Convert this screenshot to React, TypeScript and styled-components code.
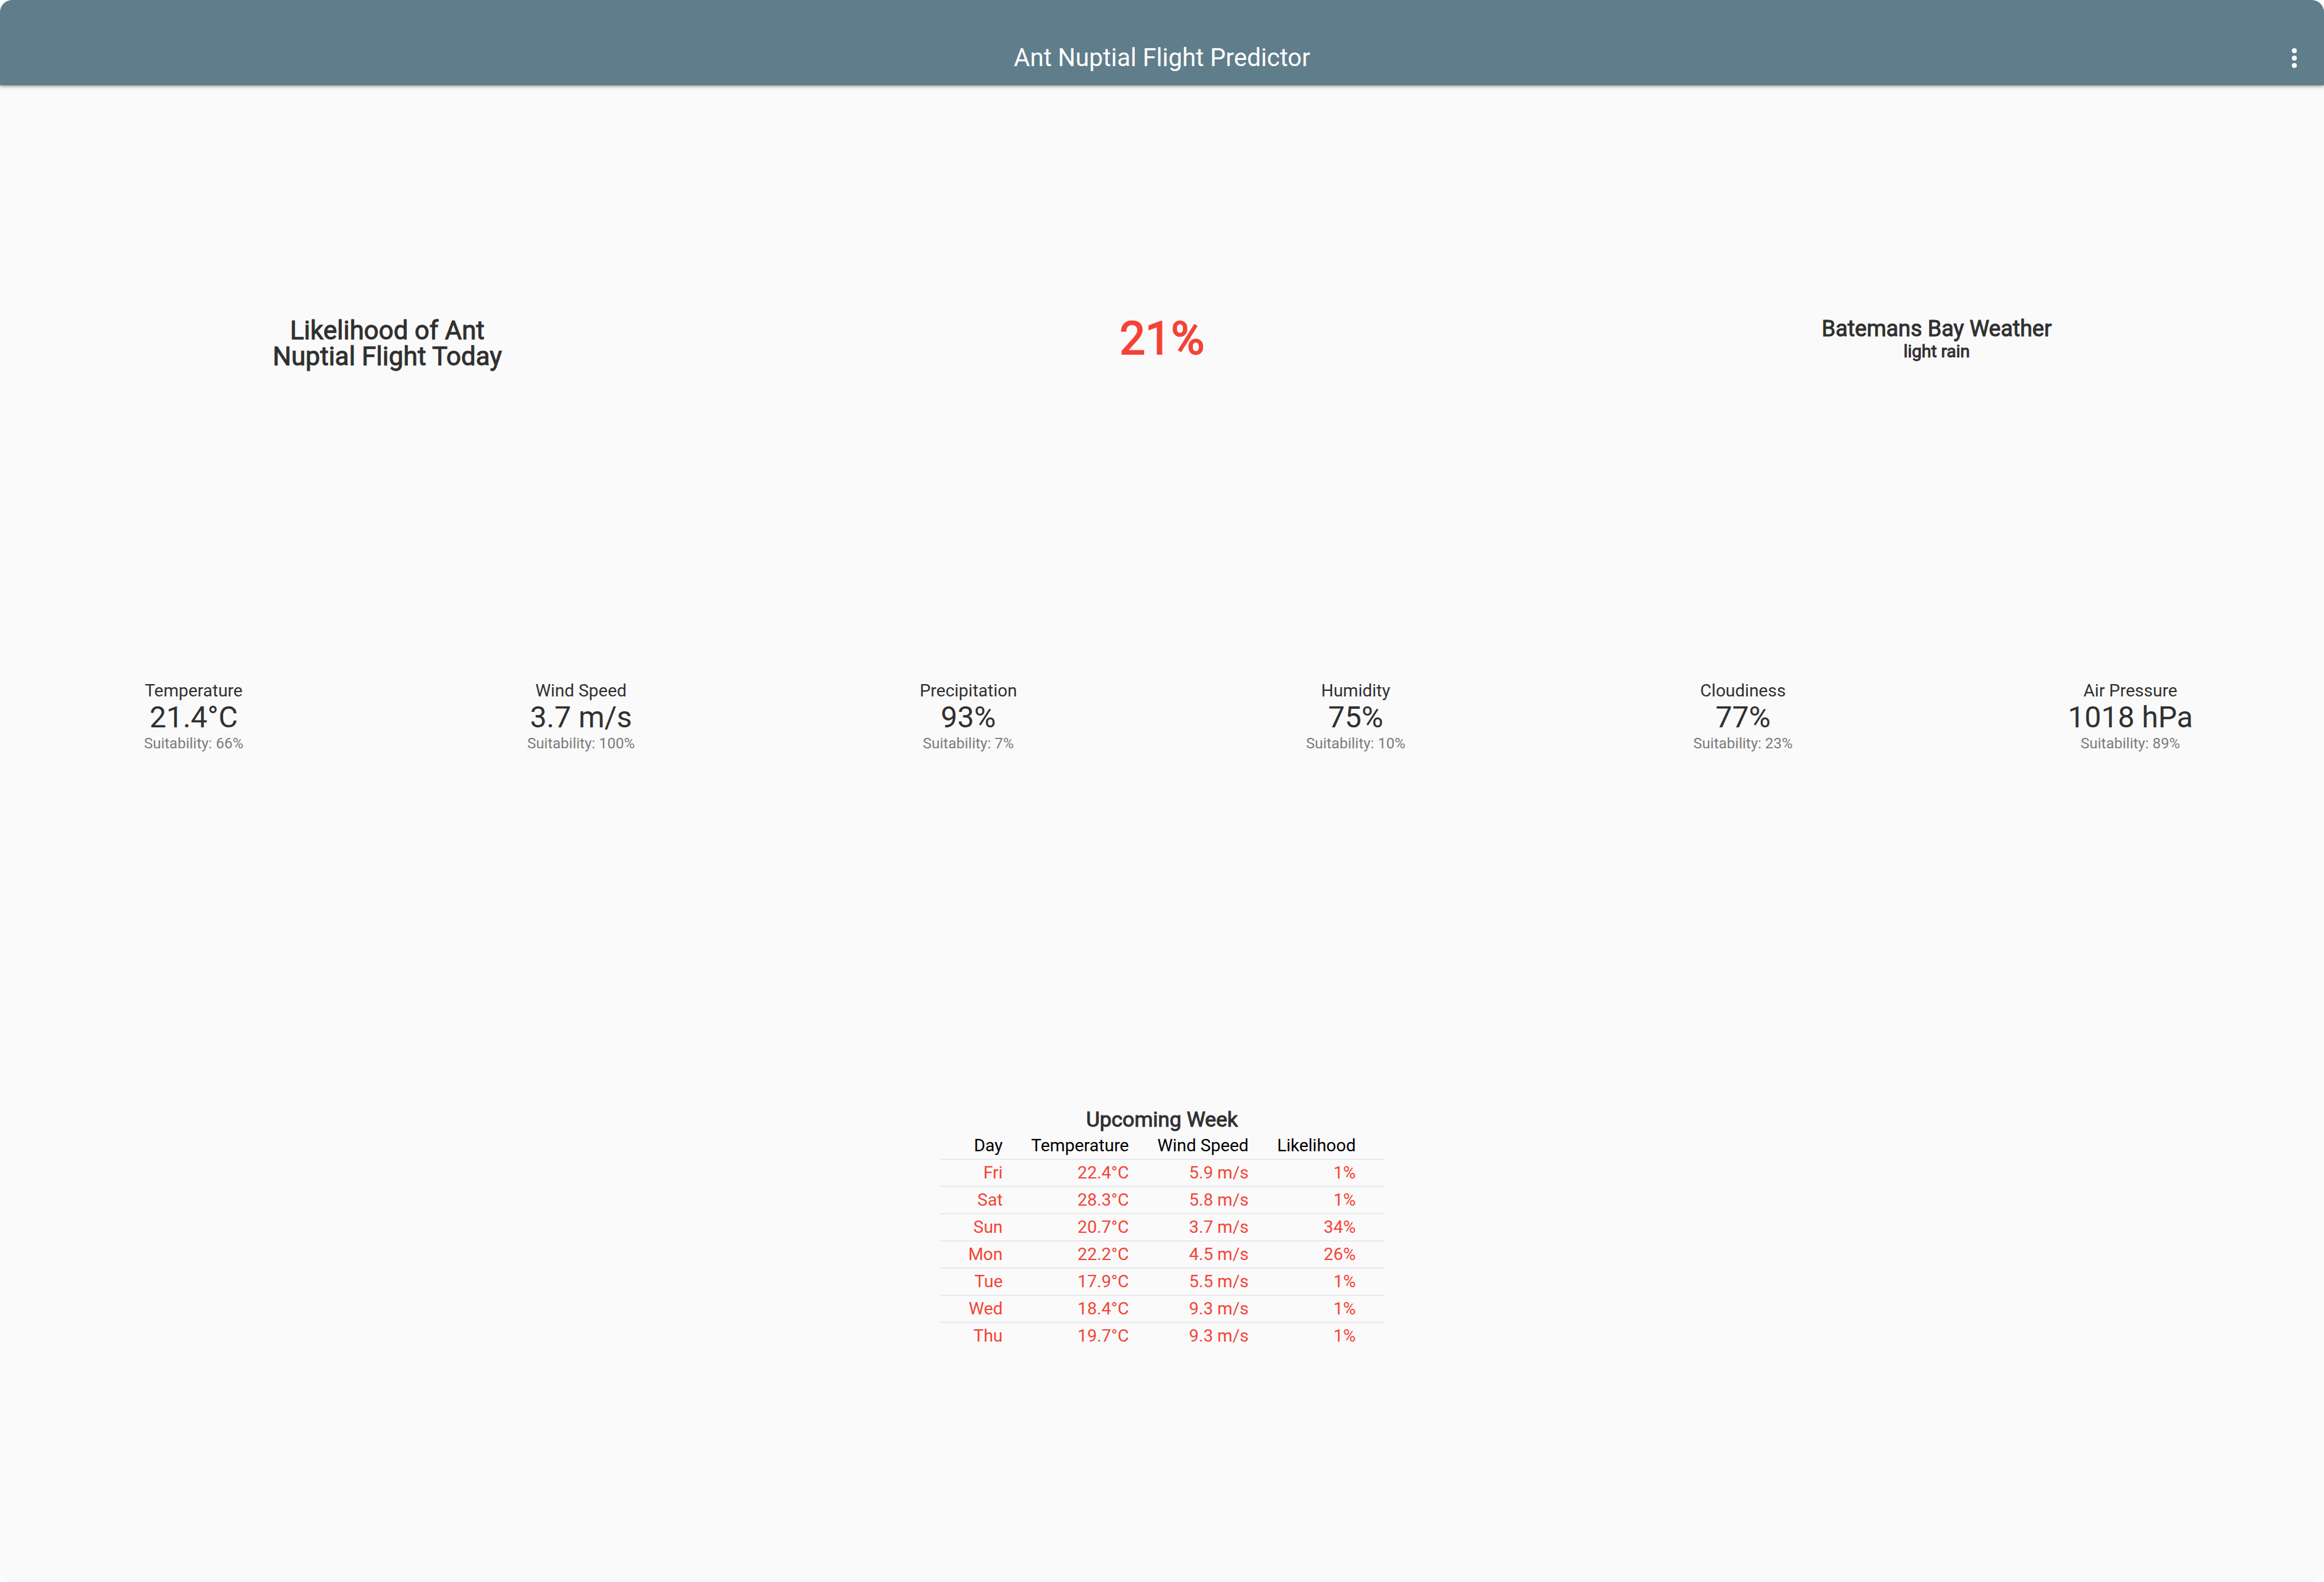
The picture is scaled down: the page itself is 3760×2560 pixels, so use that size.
import React from "react";
import styled, { createGlobalStyle } from "styled-components";

const GlobalStyle = createGlobalStyle`
  *, *::before, *::after { box-sizing: border-box; }
  body { margin: 0; background: #ffffff; font-family: Roboto, sans-serif; }
  h1, h2, p, dl, dt, dd { margin: 0; font-weight: 400; }
`;

const Screen = styled.div`
  display: flex;
  flex-direction: column;
  min-height: 100vh;
  overflow: hidden;
  border-radius: 20px;
  background: #fafafa;
  color: #303030;
`;

const AppBar = styled.header`
  display: grid;
  grid-template-columns: 1fr auto 1fr;
  align-items: center;
  padding: 50px 24px 0;
  height: 138px;
  background: #607d8b;
  color: #ffffff;
  box-shadow: 0 1px 6px rgba(0, 0, 0, 0.5);
`;

const Title = styled.h1`
  grid-column: 2;
  font-size: 40px;
  line-height: 48px;
`;

const MenuButton = styled.button`
  justify-self: end;
  display: flex;
  width: 48px;
  height: 48px;
  padding: 0;
  border: 0;
  background: none;
  color: inherit;
  cursor: pointer;
`;

const Content = styled.main`
  flex: 1;
  display: grid;
  grid-template-rows: 820fr 404fr 1198fr;
`;

const Row = styled.section`
  display: grid;
  grid-auto-flow: column;
  grid-auto-columns: 1fr;
  align-items: center;
  text-align: center;
`;

const Heading = styled.h2`
  font-size: 36px;
  line-height: 42px;
  -webkit-text-stroke: 1px currentColor;
`;

const LeadHeading = styled(Heading)`
  padding-top: 16px;
  font-size: 42px;
`;

const WeekHeading = styled(Heading)`
  margin-bottom: 4px;
  font-size: 34px;
  line-height: 36px;
`;

const Chance = styled.p`
  color: #f44336;
  font-size: 74px;
  line-height: 80px;
  -webkit-text-stroke: 2px currentColor;
`;

const Condition = styled.p`
  font-size: 28px;
  line-height: 32px;
  -webkit-text-stroke: 1px currentColor;
`;

const Metric = styled.dl`
  display: flex;
  flex-direction: column;
`;

const MetricName = styled.dt`
  font-size: 28px;
  line-height: 30px;
`;

const MetricValue = styled.dd`
  font-size: 48px;
  line-height: 56px;
`;

const Suitability = styled.dd`
  color: #7c7c7c;
  font-size: 24px;
  line-height: 28px;
`;

const Week = styled.section`
  display: flex;
  flex-direction: column;
  align-items: center;
  justify-content: center;
  padding-top: 54px;
`;

const Table = styled.table`
  border-collapse: separate;
  border-spacing: 0;
  font-size: 28px;
  line-height: 32px;
  text-align: right;
`;

const HeadCell = styled.th`
  height: 42px;
  padding: 0 23px;
  color: #000000;
  font-weight: 400;
  &:first-child { padding-left: 45px; }
  &:last-child { padding-right: 45px; }
`;

const Cell = styled.td`
  height: 44px;
  padding: 0 23px;
  border-top: 2px solid #e9e9e9;
  color: #f44336;
  &:first-child { padding-left: 45px; }
  &:last-child { padding-right: 45px; }
`;

const metrics = [
  { name: "Temperature", value: "21.4°C", suitability: 66 },
  { name: "Wind Speed", value: "3.7 m/s", suitability: 100 },
  { name: "Precipitation", value: "93%", suitability: 7 },
  { name: "Humidity", value: "75%", suitability: 10 },
  { name: "Cloudiness", value: "77%", suitability: 23 },
  { name: "Air Pressure", value: "1018 hPa", suitability: 89 },
];

const week = [
  ["Fri", "22.4°C", "5.9 m/s", "1%"],
  ["Sat", "28.3°C", "5.8 m/s", "1%"],
  ["Sun", "20.7°C", "3.7 m/s", "34%"],
  ["Mon", "22.2°C", "4.5 m/s", "26%"],
  ["Tue", "17.9°C", "5.5 m/s", "1%"],
  ["Wed", "18.4°C", "9.3 m/s", "1%"],
  ["Thu", "19.7°C", "9.3 m/s", "1%"],
];

export default function App() {
  return (
    <>
      <GlobalStyle />
      <Screen>
        <AppBar>
          <Title>Ant Nuptial Flight Predictor</Title>
          <MenuButton type="button" aria-label="More options">
            <svg width="48" height="48" viewBox="0 0 24 24" fill="currentColor" aria-hidden="true">
              <circle cx="12" cy="6" r="2" />
              <circle cx="12" cy="12" r="2" />
              <circle cx="12" cy="18" r="2" />
            </svg>
          </MenuButton>
        </AppBar>
        <Content>
          <Row>
            <LeadHeading>
              Likelihood of Ant
              <br />
              Nuptial Flight Today
            </LeadHeading>
            <Chance>21%</Chance>
            <div>
              <Heading>Batemans Bay Weather</Heading>
              <Condition>light rain</Condition>
            </div>
          </Row>
          <Row>
            {metrics.map((m) => (
              <Metric key={m.name}>
                <MetricName>{m.name}</MetricName>
                <MetricValue>{m.value}</MetricValue>
                <Suitability>Suitability: {m.suitability}%</Suitability>
              </Metric>
            ))}
          </Row>
          <Week>
            <WeekHeading>Upcoming Week</WeekHeading>
            <Table>
              <thead>
                <tr>
                  {["Day", "Temperature", "Wind Speed", "Likelihood"].map((h) => (
                    <HeadCell key={h} scope="col">{h}</HeadCell>
                  ))}
                </tr>
              </thead>
              <tbody>
                {week.map((cells) => (
                  <tr key={cells[0]}>
                    {cells.map((c, i) => (
                      <Cell key={i}>{c}</Cell>
                    ))}
                  </tr>
                ))}
              </tbody>
            </Table>
          </Week>
        </Content>
      </Screen>
    </>
  );
}
